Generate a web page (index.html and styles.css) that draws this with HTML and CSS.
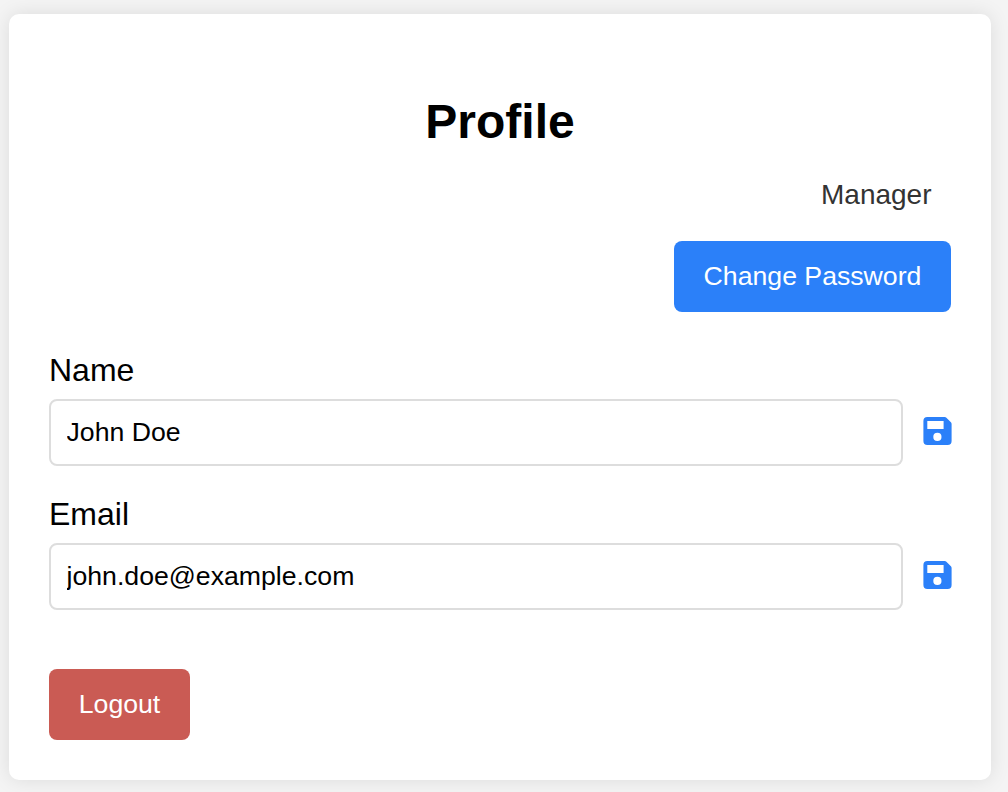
FILE: index.html
```html
<!DOCTYPE html>
<html lang="en">
<head>
<meta charset="utf-8">
<title>Profile</title>
<link rel="stylesheet" href="styles.css">
</head>
<body>
<main class="card">
  <h1 class="title">Profile</h1>
  <p class="role">Manager</p>
  <button class="btn btn-primary">Change Password</button>
  <label class="label" for="name">Name</label>
  <div class="row">
    <input class="input" id="name" type="text" value="John Doe">
    <svg class="save" viewBox="0 0 29 28"><path d="M4.4 0H21.6Q22.7 0 23.4.7L27.9 5.2Q28.6 5.9 28.6 7V24Q28.6 28 24.6 28H4.4Q.4 28 .4 24V4Q.4 0 4.4 0zM4.3 4V12H20.6V4zM14.4 15.8a4.1 4.1 0 1 0 0 8.2 4.1 4.1 0 1 0 0-8.2z"/></svg>
  </div>
  <label class="label" for="email">Email</label>
  <div class="row">
    <input class="input" id="email" type="text" value="john.doe@example.com">
    <svg class="save" viewBox="0 0 29 28"><path d="M4.4 0H21.6Q22.7 0 23.4.7L27.9 5.2Q28.6 5.9 28.6 7V24Q28.6 28 24.6 28H4.4Q.4 28 .4 24V4Q.4 0 4.4 0zM4.3 4V12H20.6V4zM14.4 15.8a4.1 4.1 0 1 0 0 8.2 4.1 4.1 0 1 0 0-8.2z"/></svg>
  </div>
  <button class="btn btn-danger">Logout</button>
</main>
</body>
</html>
```

FILE: styles.css
```css
* { box-sizing: border-box; }
body {
  margin: 0;
  height: 792px;
  overflow: hidden;
  padding: 14px 17px 12px 9px;
  background: #f4f4f4;
  font-family: "Liberation Sans", Arial, sans-serif;
  color: #000;
}
.card {
  display: flex;
  flex-direction: column;
  height: 766px;
  padding: 80px 40px 40px;
  background: #fff;
  border-radius: 10px;
  box-shadow: 0 0 20px rgba(0, 0, 0, 0.1);
}
.title { margin: 0; font-size: 48px; line-height: 56px; text-align: center; }
.role { margin: 29px 19.5px 0 0; font-size: 28px; line-height: 32px; color: #333; text-align: right; }
.btn {
  height: 71px;
  padding: 0;
  border: 0;
  border-radius: 8px;
  color: #fff;
  font: 26.67px "Liberation Sans", Arial, sans-serif;
}
.btn-primary { align-self: flex-end; width: 277px; margin: 30px 0 40px; background: #2b80f9; }
.label { font-size: 32px; line-height: 36px; margin-bottom: 11px; }
.row { display: flex; align-items: center; gap: 20px; height: 67px; margin-bottom: 30px; }
.input {
  flex: 1;
  min-width: 0;
  height: 67px;
  padding: 0 15.5px;
  border: 2px solid #ddd;
  border-radius: 8px;
  background: #fff;
  color: #000;
  font: 26.67px "Liberation Sans", Arial, sans-serif;
}
.save { flex: none; width: 29px; height: 28px; margin: 0 -1px 3px 0; fill: #2b80f9; fill-rule: evenodd; }
.btn-danger { width: 141px; margin-top: 29px; background: #ca5b54; }
```
